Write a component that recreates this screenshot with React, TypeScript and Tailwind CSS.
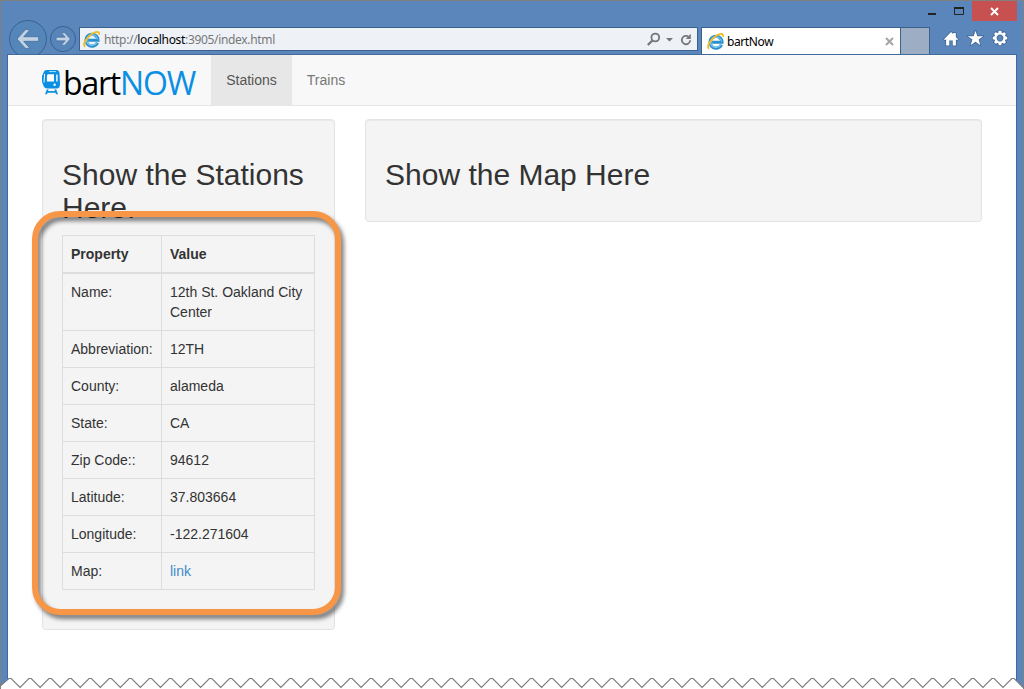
import React from "react";

const rows = [
  ["Name:", "12th St. Oakland City Center"],
  ["Abbreviation:", "12TH"],
  ["County:", "alameda"],
  ["State:", "CA"],
  ["Zip Code::", "94612"],
  ["Latitude:", "37.803664"],
  ["Longitude:", "-122.271604"],
  ["Map:", "link"],
];

function BrowserIcon() {
  return (
    <svg width="17" height="17" viewBox="0 0 16 16" className="-mr-px shrink-0">
      <path d="M13.6 11A5.6 5.6 0 1 1 14.1 8.7H4.8" fill="none" stroke="#2b8fce" strokeWidth="3" />
      <path d="M12.9 11.2A5.4 5.4 0 0 1 3.4 10.2A5.4 5.4 0 0 1 8.6 3.6A5 5 0 0 1 13.6 8" fill="none" stroke="#7fcdf0" strokeWidth="1.1" />
      <path d="M2 14.8C-0.8 12.8 3.2 6 8.6 2.6C12.4 0.2 15.8 0.1 15.2 3.6" fill="none" stroke="#f3bd20" strokeWidth="1.7" />
    </svg>
  );
}

function NavButtons() {
  return (
    <svg width="79" height="33" viewBox="0 21 79 33" className="shrink-0 overflow-visible">
      <circle cx="28" cy="39" r="18.5" fill="#4f86ba" fillOpacity=".55" stroke="#3a6191" />
      <circle cx="63" cy="39" r="12.6" fill="#4f86ba" fillOpacity=".3" stroke="#3a6191" />
      <path d="M17 39L25.5 29.6H30L23.7 36.7H38.7V41.3H23.7L30 48.4H25.5Z" fill="#c2d2e5" stroke="#3f6694" strokeWidth=".7" />
      <path d="M70.3 39L64.7 32.7H61.3L65.2 37.2H56.2V40.8H65.2L61.3 45.3H64.7Z" fill="#c2d2e5" stroke="#3f6694" strokeWidth=".6" />
    </svg>
  );
}

function AddressIcons() {
  return (
    <svg width="51" height="22" viewBox="646 28 51 22" className="shrink-0">
      <g fill="none" stroke="#74777b">
        <circle cx="655.3" cy="37.5" r="3.9" strokeWidth="1.8" />
        <path d="M652.4 40.5L647.8 45" strokeWidth="2.3" />
        <path d="M688.6 36.7A4.2 4.2 0 1 0 690.2 40.3" strokeWidth="1.8" />
      </g>
      <path d="M666 38H673L669.5 41.6ZM690.8 33.8V39H685.8Z" fill="#74777b" />
    </svg>
  );
}

function ToolIcons() {
  const teeth = [0, 45, 90, 135, 180, 225, 270, 315];
  return (
    <svg width="70" height="24" viewBox="942 27 70 24" className="shrink-0">
      <g stroke="#3d6595" strokeWidth="1.6" strokeLinejoin="round" paintOrder="stroke" fill="#fff">
        <path d="M944 39.3L951 32L953.3 34.3V33H955.8V37L958 39.3L957 40.3L955.9 39.2V45.4H952.7V40.5H949.3V45.4H946.1V39.2L945 40.3Z" />
        <path d="M975.5 30.7L977.4 36.2H983.3L978.6 39.6L980.4 45.2L975.5 41.8L970.6 45.2L972.4 39.6L967.7 36.2H973.6Z" />
      </g>
      <g transform="translate(1000 38)" fill="none">
        {teeth.map((a) => (
          <path key={a} d="M0 -4V-7.8" stroke="#3d6595" strokeWidth="4.4" transform={`rotate(${a})`} />
        ))}
        <circle r="4.7" stroke="#3d6595" strokeWidth="4" />
        {teeth.map((a) => (
          <path key={a} d="M0 -4V-7.2" stroke="#fff" strokeWidth="2.9" transform={`rotate(${a})`} />
        ))}
        <circle r="4.6" stroke="#fff" strokeWidth="2.4" />
      </g>
    </svg>
  );
}

function TrainIcon() {
  return (
    <svg width="19" height="25" viewBox="0 0 19 25" className="shrink-0">
      <path d="M5 0H14.5C16.5 0 17.5 1.5 17.6 4L18 14C18 17 16.8 18.5 14.5 18.5H5.5C3 18.5 1.8 17 1.2 15L0 12V6L1.2 3.5C1.8 1 3 0 5 0Z" fill="#0a8fe2" />
      <path d="M4.8 19.5H6.7L6 21H13L12.3 19.5H14.2L16 24.3H14L13.5 22.8H5.5L5 24.3H3Z" fill="#0a8fe2" />
      <path d="M7 1.6H14" stroke="#fff" strokeWidth=".7" />
      <path d="M2.6 4L2 12.5" stroke="#fff" strokeWidth="1" />
      <path d="M6.4 4.2H12V11.4H4.9V5.7Q5 4.3 6.4 4.2ZM14.2 4.6H15.6V11.4H14.2Z" fill="#fff" />
      <circle cx="12.6" cy="14.8" r="1.2" fill="#fff" />
    </svg>
  );
}

function TornEdge() {
  let line = "M0 686.5";
  for (let i = 0; i < 51; i++) {
    const x = i * 20.06;
    line += `L${x + 8.8} 678.5H${x + 11.2}L${x + 20.06} 687.5`;
  }
  return (
    <svg width="1024" height="12" viewBox="0 677 1024 12" className="pointer-events-none absolute bottom-0 -left-px">
      <path d={`${line}L1024 689H0Z`} fill="#fff" />
      <path d={line} fill="none" stroke="#7c7c7c" strokeWidth="1.1" />
    </svg>
  );
}

const panel = "rounded-[4px] border border-[#e3e3e3] bg-[#f4f4f4] px-[19px] shadow-[inset_0_1px_1px_rgba(0,0,0,0.05)]";

export default function App() {
  return (
    <div className="relative flex h-[689px] w-[1024px] flex-col overflow-hidden border-x border-t border-[#808080] bg-[#5b86bb] font-['Liberation_Sans',sans-serif] text-sm text-[#333]">
      <div className="flex h-5 shrink-0 justify-end pr-[6px]">
        <svg width="44" height="20" viewBox="928 1 44 20" className="shrink-0">
          <path d="M928 13H936V15H928Z" fill="#222" />
          <path d="M954.5 8H963.5V14.5H954.5Z" fill="none" stroke="#222" />
          <path d="M954 8H964" stroke="#222" strokeWidth="2" />
        </svg>
        <div className="flex w-[45px] items-center justify-center bg-[#c75050]">
          <svg width="9" height="9" viewBox="0 0 9 9" className="mt-px">
            <path d="M1 1L8 8M8 1L1 8" stroke="#fff" strokeWidth="1.9" />
          </svg>
        </div>
      </div>
      <div className="-ml-px flex h-[33px] shrink-0 items-start">
        <NavButtons />
        <div className="mt-[6px] flex h-6 w-[619px] items-center border border-[#3b618f] bg-[#eef2f7] pl-[3px] font-['Noto_Sans',sans-serif] text-[12px] text-[#777]">
          <BrowserIcon />
          <span className="mt-[2px] ml-[5px] grow whitespace-nowrap tracking-[-0.33px]">
            http://<span className="text-black">localhost</span>:3905/index.html
          </span>
          <AddressIcons />
        </div>
        <div className="mt-[6px] ml-[3px] flex h-[28px] w-[200px] items-center border border-b-0 border-[#3b618f] bg-white pl-[5px] font-['Noto_Sans',sans-serif] text-[12px] text-black">
          <BrowserIcon />
          <span className="mt-px ml-1 grow tracking-[-0.4px]">bartNow</span>
          <svg width="9" height="9" viewBox="0 0 9 9" className="mr-[6px]">
            <path d="M1 1L8 8M8 1L1 8" stroke="#a5a5a5" strokeWidth="2" />
          </svg>
        </div>
        <div className="mt-[6px] h-[28px] w-[29px] border border-l-0 border-[#3b618f] bg-[#9dadc4]" />
        <div className="mt-[6px] ml-3">
          <ToolIcons />
        </div>
      </div>
      <div className="relative mr-[6px] ml-[6px] flex grow flex-col border-x border-t border-[#426a9a] bg-white">
        <div className="flex h-[51px] shrink-0 border-b border-[#e7e7e7] bg-[#f8f8f8] text-[#777]">
          <div className="flex w-[203px] pt-[15px] pl-[34px]">
            <TrainIcon />
            <span className="-mt-[10px] ml-[2px] whitespace-nowrap font-['Open_Sans',sans-serif] text-[32px] leading-[46px] tracking-[-1.2px] text-black">
              bart<span className="text-[#0a8fe2]">NOW</span>
            </span>
          </div>
          <div className="flex w-[81px] items-center justify-center bg-[#e7e7e7] text-[#555]">Stations</div>
          <div className="flex w-[68px] items-center justify-center">Trains</div>
        </div>
        <div className="flex items-start gap-[30px] pt-[13px] pl-[34px]">
          <div className={`h-[511px] w-[293px] pt-[38px] ${panel}`}>
            <h2 className="h-[77px] text-[30px] leading-[33px] whitespace-nowrap">
              Show the Stations
              <br />
              Here.
            </h2>
            <table className="w-[253px] table-fixed border-collapse border border-[#ddd] leading-5">
              <colgroup>
                <col className="w-[99px]" />
                <col />
              </colgroup>
              <thead>
                <tr className="border-b-2 border-[#ddd]">
                  <th className="h-[37px] border-r border-[#ddd] px-2 py-0 text-left">Property</th>
                  <th className="px-2 py-0 text-left">Value</th>
                </tr>
              </thead>
              <tbody>
                {rows.map(([name, value]) => (
                  <tr key={name} className="border-b border-[#ddd]">
                    <td className="border-r border-[#ddd] p-2 align-top">{name}</td>
                    <td className={value === "link" ? "p-2 text-[#428bca]" : "p-2"}>{value}</td>
                  </tr>
                ))}
              </tbody>
            </table>
          </div>
          <div className={`h-[103px] w-[617px] pt-[38px] ${panel}`}>
            <h2 className="text-[30px] leading-[33px]">Show the Map Here</h2>
          </div>
        </div>
      </div>
      <div className="pointer-events-none absolute top-[210px] left-[31px] h-[404px] w-[309px] rounded-[28px] border-[6px] border-[#f79646] drop-shadow-[3px_4px_2px_rgba(0,0,0,0.5)]" />
      <TornEdge />
    </div>
  );
}
